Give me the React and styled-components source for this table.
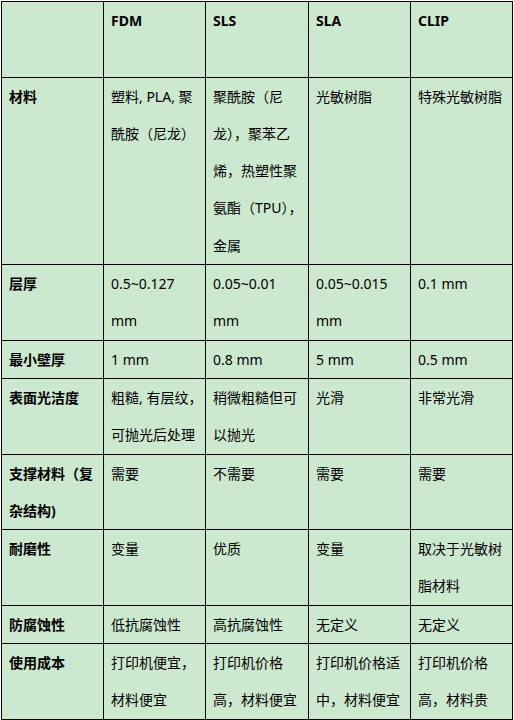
import React from 'react';
import styled, { createGlobalStyle } from 'styled-components';

const GlobalStyle = createGlobalStyle`
  html, body {
    margin: 0;
    padding: 0;
    background: #fff;
  }
  body {
    font-family: "Noto Sans", "Noto Sans CJK SC", sans-serif;
    color: #000;
  }
`;

const Wrapper = styled.div`
  padding: 1px 0 0 1px;
`;

const Table = styled.table`
  width: 511px;
  table-layout: fixed;
  border-collapse: collapse;
  border: 1px solid #000;
  background: #cce8cf;
  font-size: 14px;
  line-height: 37.3px;
`;

const Col = styled.col`
  width: ${props => props.$w}px;
`;

const HeadCell = styled.th`
  border: 1px solid #000;
  padding: 0 1px 0 7px;
  height: 74.6px;
  text-align: left;
  vertical-align: top;
  font-weight: bold;
`;

const Cell = styled.td`
  border: 1px solid #000;
  padding: 0 1px 0 7px;
  text-align: left;
  vertical-align: top;
  font-weight: ${props => (props.$label ? 'bold' : 'normal')};
  white-space: pre;
  overflow: hidden;
`;

const columns = ['FDM', 'SLS', 'SLA', 'CLIP'];
const widths = [102, 102, 103, 102, 102];

// each cell keeps the line breaks of the original table
const rows = [
  ['材料', '塑料, PLA, 聚\n酰胺（尼龙）', '聚酰胺（尼\n龙），聚苯乙\n烯，热塑性聚\n氨酯（TPU），\n金属', '光敏树脂', '特殊光敏树脂'],
  ['层厚', '0.5~0.127\nmm', '0.05~0.01\nmm', '0.05~0.015\nmm', '0.1 mm'],
  ['最小壁厚', '1 mm', '0.8 mm', '5 mm', '0.5 mm'],
  ['表面光洁度', '粗糙, 有层纹，\n可抛光后处理', '稍微粗糙但可\n以抛光', '光滑', '非常光滑'],
  ['支撑材料（复\n杂结构)', '需要', '不需要', '需要', '需要'],
  ['耐磨性', '变量', '优质', '变量', '取决于光敏树\n脂材料'],
  ['防腐蚀性', '低抗腐蚀性', '高抗腐蚀性', '无定义', '无定义'],
  ['使用成本', '打印机便宜，\n材料便宜', '打印机价格\n高，材料便宜', '打印机价格适\n中，材料便宜', '打印机价格\n高，材料贵'],
];

const App = () => {
  return (
    <Wrapper>
      <GlobalStyle />
      <Table>
        <colgroup>
          {widths.map((w, i) => (
            <Col key={i} $w={w} />
          ))}
        </colgroup>
        <thead>
          <tr>
            <HeadCell />
            {columns.map(c => (
              <HeadCell key={c}>{c}</HeadCell>
            ))}
          </tr>
        </thead>
        <tbody>
          {rows.map(r => (
            <tr key={r[0]}>
              {r.map((v, i) => (
                <Cell key={i} $label={i === 0}>{v}</Cell>
              ))}
            </tr>
          ))}
        </tbody>
      </Table>
    </Wrapper>
  );
};

export default App;
